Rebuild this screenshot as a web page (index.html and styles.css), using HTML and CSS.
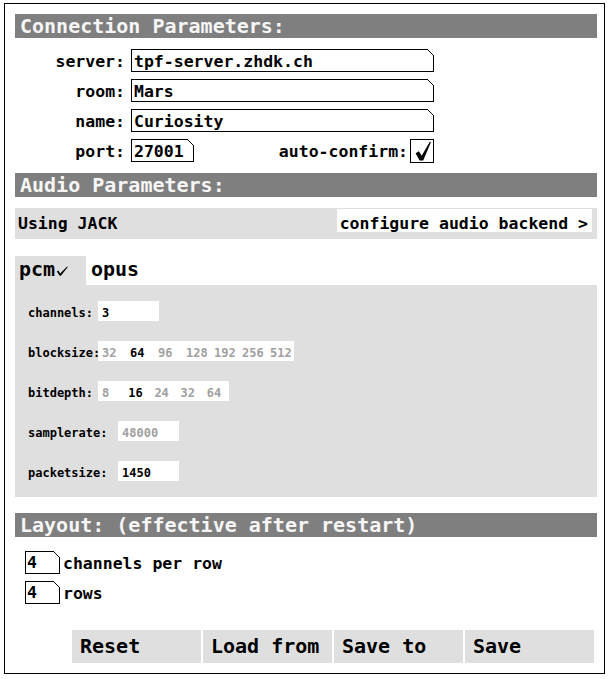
FILE: index.html
```html
<!DOCTYPE html>
<html>
<head>
<meta charset="utf-8">
<link rel="stylesheet" href="styles.css">
</head>
<body>
<div class="frame">
  <div class="hdr">Connection Parameters:</div>
  <div class="conn">
    <div class="row"><span class="lbl">server:</span><span class="sym wide">tpf-server.zhdk.ch</span></div>
    <div class="row"><span class="lbl">room:</span><span class="sym wide">Mars</span></div>
    <div class="row"><span class="lbl">name:</span><span class="sym wide">Curiosity</span></div>
    <div class="row"><span class="lbl">port:</span>
      <div class="portline"><span class="sym port">27001</span><span class="ac">auto-confirm:</span><span class="tgl"><svg class="chk" width="22" height="22" viewBox="0 0 22 22"><path d="M4.6 13.2 L7.9 11.2 L10.7 15.8 L19 1.5 L19.9 2.2 L12.2 20.6 L8.6 20.6 Z" fill="#000"/></svg></span></div>
    </div>
  </div>
  <div class="hdr h2">Audio Parameters:</div>
  <div class="jack"><span class="jtxt">Using JACK</span><span class="cfg">configure audio backend &gt;</span></div>
  <div class="tabs"><span class="tab on">pcm<svg class="tick" width="12" height="10" viewBox="0 0 12 10"><path d="M0.8 5.4 L2.3 4.5 L4.2 7.5 L11.1 0.4 L11.8 1 L4.9 9.7 L3.7 9.7 Z" fill="#000"/></svg></span><span class="tab">opus</span></div>
  <div class="panel">
    <div class="prow"><span class="plbl">channels:</span><span class="pbox w61"><span class="sel">3</span></span></div>
    <div class="prow"><span class="plbl">blocksize:</span><span class="pbox"><span class="c c28">32</span><span class="c c28 sel">64</span><span class="c c28">96</span><span class="c c28">128</span><span class="c c28">192</span><span class="c c28">256</span><span class="c c28">512</span></span></div>
    <div class="prow"><span class="plbl">bitdepth:</span><span class="pbox"><span class="c c26">8</span><span class="c c26 sel">16</span><span class="c c26">24</span><span class="c c26">32</span><span class="c c26">64</span></span></div>
    <div class="prow"><span class="plbl long">samplerate:</span><span class="pbox w61 dim">48000</span></div>
    <div class="prow"><span class="plbl long">packetsize:</span><span class="pbox w61"><span class="sel">1450</span></span></div>
  </div>
  <div class="hdr h3">Layout: (effective after restart)</div>
  <div class="lrows">
    <div class="lrow"><span class="sym lbox">4</span><span class="ltxt">channels per row</span></div>
    <div class="lrow"><span class="sym lbox">4</span><span class="ltxt">rows</span></div>
  </div>
  <div class="btns">
    <span class="btn">Reset</span>
    <span class="btn">Load from</span>
    <span class="btn">Save to</span>
    <span class="btn">Save</span>
  </div>
</div>
</body>
</html>
```
FILE: styles.css
```css
* { box-sizing: border-box; }
html, body { margin: 0; padding: 0; background: #fff; }
body {
  font-family: "DejaVu Sans Mono", "Liberation Mono", monospace;
  font-weight: bold;
  color: #000;
}
.frame {
  margin: 3px 0 0 4px;
  width: 601px;
  height: 671px;
  border: 1px solid #000;
  padding: 10px 0 0 10px;
}
.hdr {
  width: 582px;
  height: 24px;
  background: #7f7f7f;
  color: #f6f6f6;
  font-size: 20px;
  line-height: 24px;
  padding-left: 5px;
  white-space: pre;
}
.h2 { margin-top: 11px; }
.h3 { margin-top: 16px; }

.conn { display: flex; flex-direction: column; gap: 7px; margin-top: 11px; }
.row { display: flex; height: 23px; }
.lbl {
  width: 110px;
  text-align: right;
  font-size: 16.5px;
  line-height: 25px;
  margin-right: 6px;
}
.sym {
  position: relative;
  display: block;
  height: 23px;
  border: 1px solid #000;
  font-size: 16.5px;
  line-height: 23px;
  padding-left: 2px;
  white-space: pre;
}
.sym::after {
  content: "";
  position: absolute;
  top: -1px;
  right: -1px;
  width: 7px;
  height: 7px;
  background: linear-gradient(45deg, transparent calc(50% - 0.7px), #000 calc(50% - 0.7px), #000 calc(50% + 0.7px), #fff calc(50% + 0.7px));
}
.wide { width: 303px; }
.portline { display: flex; width: 303px; }
.port { width: 63px; }
.ac { margin-left: auto; margin-right: 2px; font-size: 16.5px; line-height: 25px; }
.tgl {
  width: 24px;
  height: 24px;
  border: 1px solid #000;
}
.chk { display: block; }

.jack {
  margin-top: 11px;
  width: 582px;
  height: 31px;
  background: #dfdfdf;
  display: flex;
  justify-content: space-between;
  align-items: flex-start;
  padding: 1px 5px 0 3px;
  font-size: 16.5px;
}
.jtxt { line-height: 29px; }
.cfg { background: #fff; height: 23px; line-height: 29px; padding: 0 4px 0 3px; overflow: hidden; }

.tabs { display: flex; margin-top: 17px; height: 29px; }
.tab { font-size: 20px; line-height: 27px; padding: 0 0 2px 5px; }
.tab.on { background: #dfdfdf; width: 71px; padding-left: 4px; }
.tick { margin-left: 1px; vertical-align: baseline; }

.panel {
  width: 582px;
  height: 212px;
  background: #dfdfdf;
  padding: 16px 0 0 13px;
  display: flex;
  flex-direction: column;
  gap: 20px;
  font-size: 12px;
}
.prow { display: flex; height: 20px; line-height: 24px; }
.plbl { width: 70px; }
.plbl.long { width: 90px; }
.pbox { display: flex; background: #fff; height: 20px; }
.w61 { width: 61px; padding-left: 4px; }
.c { padding-left: 4px; color: #a0a0a0; }
.c28 { width: 28px; }
.c26 { width: 26.2px; }
.sel { color: #000; }
.dim { color: #a0a0a0; }

.lrows { margin-top: 14px; margin-left: 10px; display: flex; flex-direction: column; gap: 7px; }
.lrow { display: flex; height: 23px; }
.lbox { width: 35px; padding-left: 1px; line-height: 22px; }
.ltxt { margin-left: 3px; font-size: 16.5px; line-height: 25px; }

.btns { margin-top: 26px; margin-left: 57px; display: flex; gap: 2px; }
.btn {
  width: 129px;
  height: 33px;
  background: #dfdfdf;
  font-size: 20px;
  line-height: 33px;
  padding-left: 8px;
  white-space: pre;
}
```
